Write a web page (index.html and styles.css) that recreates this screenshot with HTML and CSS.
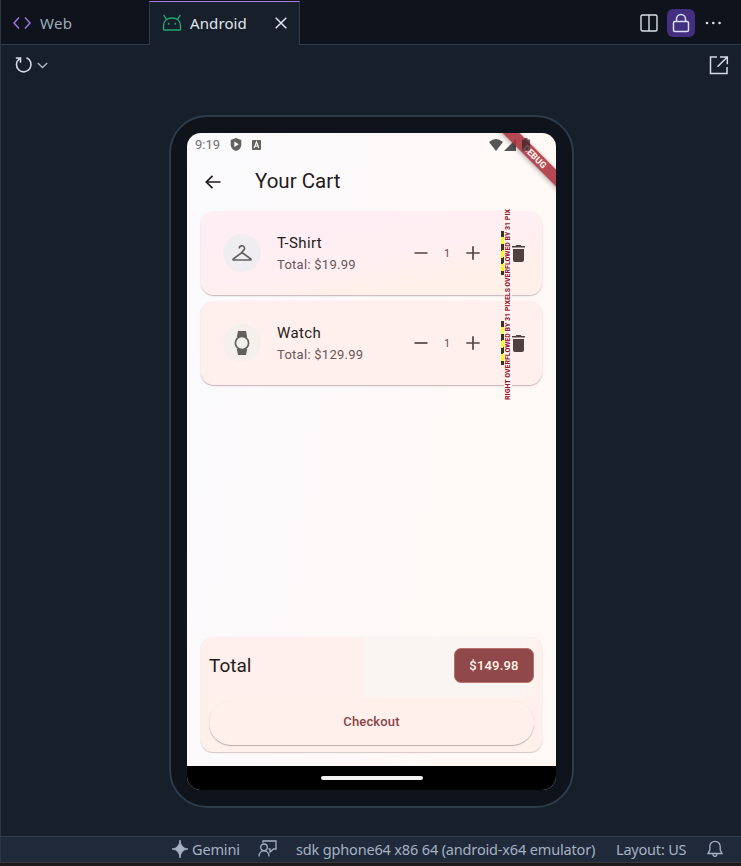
FILE: index.html
```html
<!DOCTYPE html>
<html lang="en">
<head>
<meta charset="utf-8">
<title>Android Preview</title>
<link rel="stylesheet" href="styles.css">
</head>
<body>
<div class="ide">
  <header class="tabs">
    <div class="tab web">
      <svg width="18" height="14" viewBox="0 0 18 14" fill="none" stroke="#9b72e0" stroke-width="1.5"><path d="M6 1.5 1 7l5 5.500M12 1.500 17 7l-5 5.500"/></svg>
      <span class="web-label">Web</span>
    </div>
    <div class="tab active">
      <svg width="20" height="18" viewBox="0 0 20 18" fill="none" stroke="#1fa971" stroke-width="1.400" stroke-linecap="round"><path d="M1.500 15.200V12C1.500 7 5 4 10 4s8.500 3 8.500 8v3.200q0 .8-.8.8H2.300q-.8 0-.8-.8ZM4.500 5.500 2 1.300M15.500 5.500 18 1.300"/><path d="M6.800 9.500v.4M13.200 9.500v.4" stroke-width="1.700"/></svg>
      <span class="android-label">Android</span>
      <svg class="close" width="12" height="12" viewBox="0 0 12 12" stroke="#e2e7ee" stroke-width="1.500"><path d="m.7.7 10.600 10.600m0-10.600L.7 11.300"/></svg>
    </div>
    <div class="actions">
      <svg width="18" height="18" viewBox="0 0 18 18" fill="none" stroke="#d9e0ea" stroke-width="1.400"><rect x="1" y="1" width="16" height="16" rx="1.500"/><path d="M9 1v16"/></svg>
      <span class="lock"><svg width="18" height="20" viewBox="0 0 18 20" fill="none" stroke="#d9e0f5" stroke-width="1.500"><rect x="1.500" y="8.500" width="15" height="10" rx="1.500"/><path d="M4.500 8.500V6a4.500 4.500 0 0 1 9 0v2.500"/></svg></span>
      <svg width="17" height="4" viewBox="0 0 17 4" fill="#d9e0ea"><circle cx="3" cy="2" r="1.300"/><circle cx="9.300" cy="2" r="1.300"/><circle cx="15.600" cy="2" r="1.300"/></svg>
    </div>
  </header>
  <div class="toolbar">
    <svg class="reload" width="18" height="18" viewBox="0 0 18 18" fill="none" stroke="#d5dce6" stroke-width="1.600"><path d="M11.500 1.800A7.300 7.300 0 1 1 4.300 2.800M.8 2h4.700v4.700"/></svg>
    <svg class="chevron" width="11" height="7" viewBox="0 0 11 7" fill="none" stroke="#aeb8c5" stroke-width="1.400"><path d="m.8 1 4.700 4.500L10.200 1"/></svg>
    <svg class="external" width="20" height="20" viewBox="0 0 20 20" fill="none" stroke="#d5dce6" stroke-width="1.500"><path d="M8 2H1.500v16.500H18V12M11 2h7.300v7.300M18.300 2 8.500 11.800"/></svg>
  </div>
  <main class="stage">
    <div class="phone">
      <div class="screen">
        <div class="sysbar">
          <span class="clock">9:19</span>
          <svg class="shield" width="12" height="13" viewBox="0 0 12 13"><path fill="#62625f" d="m6 0 5.300 2v4.500C11.300 10 9 12 6 13 3 12 .7 10 .7 6.500V2Z"/><path fill="#fff" d="m4.300 3.600 4.400 2.700-4.400 2.800Z"/></svg>
          <svg class="abox" width="9" height="10" viewBox="0 0 9 10"><rect width="9" height="10" rx="1" fill="#62625f"/><path d="m2.200 8 2.300-6 2.300 6M3.200 6h2.600" fill="none" stroke="#fff" stroke-width="1.200"/></svg>
          <svg class="wifi" width="14" height="12" viewBox="0 0 14 12"><path fill="#555" d="M0 3Q7-3 14 3L7 12Z"/></svg>
          <svg class="signal" width="12" height="12" viewBox="0 0 12 12"><path fill="#555" d="M12 0v12H0Z"/></svg>
          <svg class="battery" width="8" height="13" viewBox="0 0 8 13"><path fill="#3c2527" d="M2.500 0h3v1.500H8V13H0V1.500h2.500Z"/></svg>
        </div>
        <div class="debug">DEBUG</div>
        <div class="appbar">
          <svg width="16" height="14" viewBox="0 0 16 14" fill="none" stroke="#201a1a" stroke-width="1.700"><path d="M15.500 7H1.500M7.500.8 1.300 7l6.200 6.200"/></svg>
          <h1>Your Cart</h1>
        </div>
        <section class="items">
          <article class="card shirt">
            <span class="avatar"><svg width="20" height="16" viewBox="0 0 20 16" fill="none" stroke="#62605d" stroke-width="1.600" stroke-linejoin="round"><path d="M7.300 3.500a2.600 2.600 0 1 1 3.800 2.200c-.8.400-1.100.800-1.100 1.800L1.200 14q-.7.900.7 1h16.200q1.400-.1.700-1L10 7.500"/></svg></span>
            <div class="info"><b>T-Shirt</b><span>Total: $19.99</span></div>
            <div class="stepper">
              <svg width="14" height="14" viewBox="0 0 14 14" stroke="#55433f" stroke-width="1.700"><path d="M.5 7h13"/></svg>
              <i>1</i>
              <svg width="14" height="14" viewBox="0 0 14 14" stroke="#55433f" stroke-width="1.700"><path d="M.3 7h13.400M7 .3v13.400"/></svg>
            </div>
            <svg class="trash" width="13" height="17" viewBox="0 0 13 17" fill="#51413e"><path d="M0 1h3.500l.8-1h4.400l.8 1H13v1.500H0ZM1 4h11v11q0 2-2 2H3q-2 0-2-2Z"/></svg>
            <span class="stripes"></span>
            <span class="overflow upper"><span>OVERFLOWED BY 31 PIX</span></span>
          </article>
          <article class="card watch">
            <span class="avatar"><svg width="16" height="24" viewBox="0 0 16 24"><path fill="#62605a" d="M4 0h8l1.200 6H2.800ZM2.800 18h10.400L12 24H4Z"/><circle cx="8" cy="12" r="6.600" fill="#f0f1e9" stroke="#62605a" stroke-width="1.700"/></svg></span>
            <div class="info"><b>Watch</b><span>Total: $129.99</span></div>
            <div class="stepper">
              <svg width="14" height="14" viewBox="0 0 14 14" stroke="#55433f" stroke-width="1.700"><path d="M.5 7h13"/></svg>
              <i>1</i>
              <svg width="14" height="14" viewBox="0 0 14 14" stroke="#55433f" stroke-width="1.700"><path d="M.3 7h13.400M7 .3v13.400"/></svg>
            </div>
            <svg class="trash" width="13" height="17" viewBox="0 0 13 17" fill="#51413e"><path d="M0 1h3.500l.8-1h4.400l.8 1H13v1.500H0ZM1 4h11v11q0 2-2 2H3q-2 0-2-2Z"/></svg>
            <span class="stripes"></span>
            <span class="overflow"><span>RIGHT OVERFLOWED BY 31 PIXELS</span></span>
          </article>
        </section>
        <section class="summary">
          <div class="total"><span>Total</span><span class="price">$149.98</span></div>
          <div class="checkout">Checkout</div>
        </section>
        <div class="navbar"><span></span></div>
      </div>
    </div>
  </main>
  <footer class="status">
    <svg class="spark" width="16" height="18" viewBox="0 0 16 18" fill="#a5b2c4"><path d="M8 0Q8.700 8.300 16 9 8.700 9.700 8 18 7.300 9.700 0 9 7.300 8.300 8 0Z" stroke="#a5b2c4" stroke-width=".8"/></svg>
    <span class="gemini">Gemini</span>
    <svg class="feedback" width="19" height="17" viewBox="0 0 19 17" fill="none" stroke="#a5b2c4" stroke-width="1.300"><circle cx="6" cy="7.300" r="3.300"/><path d="M1 16.500c0-7.500 10-7.500 10 0M5 2.800V1h13v8h-2.500l-3.500 3V9h-1.500"/></svg>
    <span class="device">sdk gphone64 x86 64 (android-x64 emulator)</span>
    <span class="layout">Layout: US</span>
    <svg class="bell" width="16" height="18" viewBox="0 0 16 18" fill="none" stroke="#a5b2c4" stroke-width="1.300"><path d="M1 13.500 2.800 10V6.500a5.200 5.200 0 0 1 10.400 0V10l1.800 3.500ZM6 14q0 2.300 2 2.300t2-2.300"/></svg>
  </footer>
</div>
</body>
</html>
```

FILE: styles.css
```css
* { box-sizing: border-box; }
body { margin: 0; background: #191919; font-family: "Noto Sans", "Open Sans", sans-serif; }
svg { display: block; flex: none; }
.ide { width: 741px; height: 863px; display: flex; flex-direction: column; background: #171f2a; border-left: 1px solid #2b3646; border-bottom: 1px solid #383838; }
.tabs { height: 45px; flex: none; display: flex; background: #0f131b; border-top: 1px solid #0f131b; }
.tab { display: flex; align-items: center; font-size: 15px; border-bottom: 1px solid #303c4b; white-space: nowrap; }
.web { width: 148px; padding-left: 12px; gap: 9px; color: #9eabbb; }
.web-label { letter-spacing: .3px; }
.active { width: 151px; padding: 0 0 1px 12px; background: #171f2a; color: #e1e6ed; border: 1px solid #303c4b; border-top: 1px solid #a67be8; border-bottom: 0; }
.android-label { margin-left: 8px; width: 58px; letter-spacing: .1px; }
.close { margin-left: 27px; }
.actions { flex: 1; display: flex; align-items: center; justify-content: flex-end; gap: 9px; padding-right: 20px; border-bottom: 1px solid #303c4b; }
.lock { width: 28px; height: 28px; display: grid; place-items: center; border-radius: 6px; background: #432f80; }
.toolbar { height: 44px; flex: none; display: flex; align-items: center; padding: 0 12px 4px 14px; }
.chevron { margin-left: 4px; }
.external { margin-left: auto; }
.stage { flex: 1; padding: 26px 0 0 168px; }
.phone { width: 405px; height: 693px; padding: 16px; border: 2px solid #2e3b4b; border-radius: 38px; background: #0f131b; }
.screen { width: 369px; height: 657px; position: relative; overflow: hidden; border-radius: 14px; display: flex; flex-direction: column; font-family: Roboto, sans-serif; color: #251a1b; background: linear-gradient(100deg, #fafafc 0%, #fcf9fa 35%, #fff9f6 75%); }
.sysbar { height: 24px; flex: none; display: flex; align-items: center; padding: 0 26px 1px 8px; color: #70706f; font-size: 13px; }
.clock { width: 26px; }
.shield { margin-left: 9px; }
.abox { margin-left: 10px; }
.wifi { margin-left: auto; }
.signal { margin-left: 1px; }
.battery { position: relative; z-index: 1; margin-left: 6px; border-radius: 2px; opacity: .75; }
.debug { position: absolute; top: 17px; right: -26px; width: 96px; height: 12px; padding-left: 2px; transform: rotate(45deg); background: rgba(170, 48, 61, .88); color: #fff0e7; text-align: center; font-size: 9px; font-weight: 800; line-height: 12px; box-shadow: 0 1px 5px #0005; }
.appbar { height: 50px; flex: none; display: flex; align-items: center; padding: 0 0 1px 18px; gap: 34px; }
h1 { margin: 0 0 2px; font-size: 20.500px; font-weight: 400; letter-spacing: 0; }
.items { padding: 4px 14px 0; display: grid; gap: 6px; }
.card { position: relative; height: 84px; display: flex; align-items: center; padding: 0 0 0 22px; border-radius: 13px; background: linear-gradient(170deg, #ffeff5 0%, #ffeff3 50%, #fff0e9 80%); box-shadow: 0 1px 1px #c9babc, 0 1px 3px #0001; }
.watch { background: #fff0ed; }
.avatar { width: 38px; height: 38px; display: grid; place-items: center; border-radius: 50%; background: #f0edf0; }
.watch .avatar { background: #f5f0eb; }
.info { width: 124px; margin: 1px 0 0 16px; display: grid; }
.info b { font-weight: 400; font-size: 15px; line-height: 21px; letter-spacing: .35px; }
.info span { font-size: 13px; line-height: 21px; letter-spacing: .27px; color: #6b5658; }
.stepper { margin-left: 13px; width: 66px; display: flex; align-items: center; justify-content: space-between; }
.stepper i { font-style: normal; font-size: 10px; color: #55433f; }
.trash { margin-left: 32px; }
.stripes { position: absolute; left: 300px; top: 20px; width: 4px; height: 44px; background: repeating-linear-gradient(165deg, #363328 0 6px, #faf536 6px 13px); }
.overflow { position: absolute; left: 303px; top: -16px; width: 8px; height: 115px; display: flex; justify-content: center; align-items: flex-end; }
.overflow span { flex: none; writing-mode: vertical-rl; transform: rotate(180deg); background: #fff6f3; color: #981a32; font-size: 7px; line-height: 8px; font-weight: 800; white-space: nowrap; }
.upper { top: -4px; height: 80px; }
.summary { height: 115px; margin: auto 14px 14px; padding: 11px 8px 7px; border-radius: 12px; background: linear-gradient(90deg, #fff0ee 0 47%, #faf5f2 48% 93%, #fff1ec) top / 100% 60px no-repeat, #fff0ec; box-shadow: 0 1px 1px #d5c7c6, 0 0 2px #0001; }
.total { display: flex; justify-content: space-between; align-items: center; height: 35px; font-size: 19px; letter-spacing: 0; }
.price { width: 80px; height: 35px; display: grid; place-items: center; border-radius: 7px; background: #90484a; border: 1px solid #b77367; color: #fff5e8; font-size: 13px; letter-spacing: .2px; font-weight: 500; }
.checkout { height: 44px; margin-top: 18px; padding-bottom: 4px; display: grid; place-items: center; border-radius: 22px; background: #fff0eb; box-shadow: 0 1px 1px #bcadaa, 0 0 1px #0001; color: #8b4348; font-size: 13px; font-weight: 500; letter-spacing: .15px; }
.navbar { height: 24px; flex: none; display: grid; place-items: center; background: #000; }
.navbar span { width: 102px; height: 4px; border-radius: 2px; background: #f2f2f2; }
.status { height: 26px; flex: none; display: flex; align-items: center; padding-bottom: 2px; border-top: 1px solid #303d50; background: #202a3a; color: #a5b2c4; font-size: 14.500px; white-space: nowrap; }
.spark { margin-left: 171px; }
.gemini { width: 48px; margin-left: 4px; letter-spacing: -.15px; }
.feedback { margin-left: 18px; }
.device { width: 300px; margin-left: 19px; letter-spacing: -.16px; }
.layout { width: 71px; margin-left: 20px; letter-spacing: -.2px; }
.bell { margin-left: 20px; }
```
